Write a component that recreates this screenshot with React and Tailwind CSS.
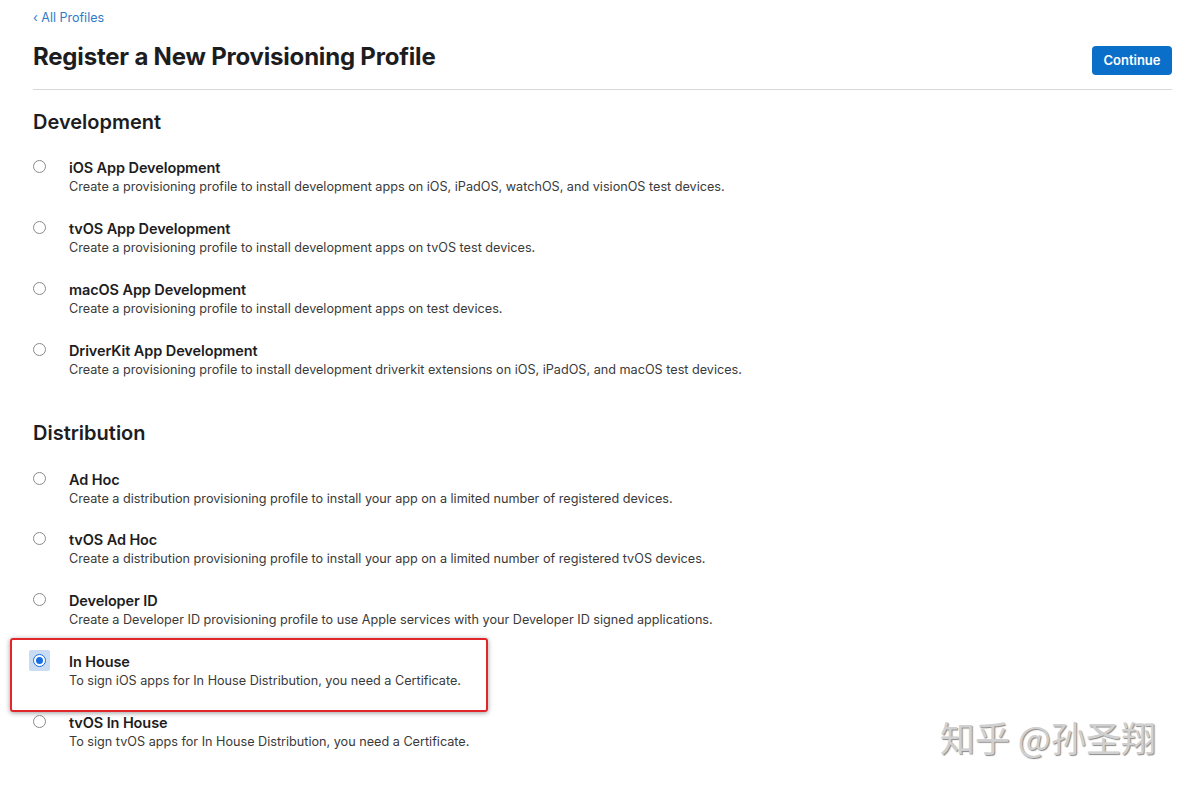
import React from "react";

const Radio = ({ checked }) =>
  checked ? (
    <div className="relative w-[13px] h-[13px] mt-[2px] shrink-0">
      <div className="absolute -left-[4px] -top-[4px] w-[21px] h-[21px] bg-[#c9dcf3] rounded-[2px]" />
      <div className="absolute inset-0 rounded-full border border-[#1a6fe0] bg-white flex items-center justify-center">
        <div className="w-[7px] h-[7px] rounded-full bg-[#1a6fe0]" />
      </div>
    </div>
  ) : (
    <div className="w-[13px] h-[13px] mt-[2px] shrink-0 rounded-full border border-[#8a8a8a] bg-white" />
  );

const Row = ({ title, desc, checked, highlight }) => (
  <div className="relative flex items-start mb-[23px]">
    {highlight && (
      <div className="absolute -left-[23px] -top-[13.5px] w-[478px] h-[74px] border-2 border-[#e0262b] rounded-[3px] shadow-[0_1px_5px_rgba(0,0,0,0.4)] pointer-events-none" />
    )}
    <Radio checked={checked} />
    <div className="ml-[23px] flex flex-col">
      <div className="text-[14.5px] leading-[19px] font-semibold text-[#1d1d1f] tracking-[-0.1px]">{title}</div>
      <div className="text-[12.65px] leading-[19px] text-[#3a3a3a]">{desc}</div>
    </div>
  </div>
);

export default function App() {
  return (
    <div className="relative w-[1190px] h-[786px] bg-white overflow-hidden" style={{ fontFamily: "Inter, 'Noto Sans', sans-serif" }}>
      <div className="pl-[33px] pr-[18px] pt-[10px]">
        <div className="h-[16px] text-[12.5px] leading-[16px] text-[#2f7bc8]">‹ All Profiles</div>
        <div className="flex justify-between items-start">
          <h1 className="mt-[16px] text-[24px] leading-[30px] font-bold text-[#1d1d1f] tracking-[-0.2px]">Register a New Provisioning Profile</h1>
          <button className="mt-[20px] w-[80px] h-[29px] rounded-[4px] bg-[#0a6fc9] text-white text-[13px] font-semibold">Continue</button>
        </div>
        <div className="mt-[14px] h-px bg-[#d8d8d8]" />
        <h2 className="mt-[18px] text-[20px] leading-[28px] font-semibold text-[#1d1d1f]">Development</h2>
        <div className="mt-[21.5px]">
          <Row title="iOS App Development" desc="Create a provisioning profile to install development apps on iOS, iPadOS, watchOS, and visionOS test devices." />
          <Row title="tvOS App Development" desc="Create a provisioning profile to install development apps on tvOS test devices." />
          <Row title="macOS App Development" desc="Create a provisioning profile to install development apps on test devices." />
          <Row title="DriverKit App Development" desc="Create a provisioning profile to install development driverkit extensions on iOS, iPadOS, and macOS test devices." />
        </div>
        <h2 className="mt-[40.5px] text-[20px] leading-[28px] font-semibold text-[#1d1d1f]">Distribution</h2>
        <div className="mt-[22.5px]">
          <div className="-mb-[1px]">
            <Row title="Ad Hoc" desc="Create a distribution provisioning profile to install your app on a limited number of registered devices." />
          </div>
          <Row title="tvOS Ad Hoc" desc="Create a distribution provisioning profile to install your app on a limited number of registered tvOS devices." />
          <Row title="Developer ID" desc="Create a Developer ID provisioning profile to use Apple services with your Developer ID signed applications." />
          <Row title="In House" desc="To sign iOS apps for In House Distribution, you need a Certificate." checked highlight />
          <Row title="tvOS In House" desc="To sign tvOS apps for In House Distribution, you need a Certificate." />
        </div>
      </div>
      <div
        className="absolute left-[940px] top-[715px] text-[35px] leading-[44px] text-[#d0d0d0] whitespace-nowrap [text-shadow:1px_1px_1px_rgba(60,60,60,0.6)]"
        style={{ fontFamily: "'Noto Sans CJK SC', sans-serif" }}
      >
        知乎 @孙圣翔
      </div>
    </div>
  );
}
